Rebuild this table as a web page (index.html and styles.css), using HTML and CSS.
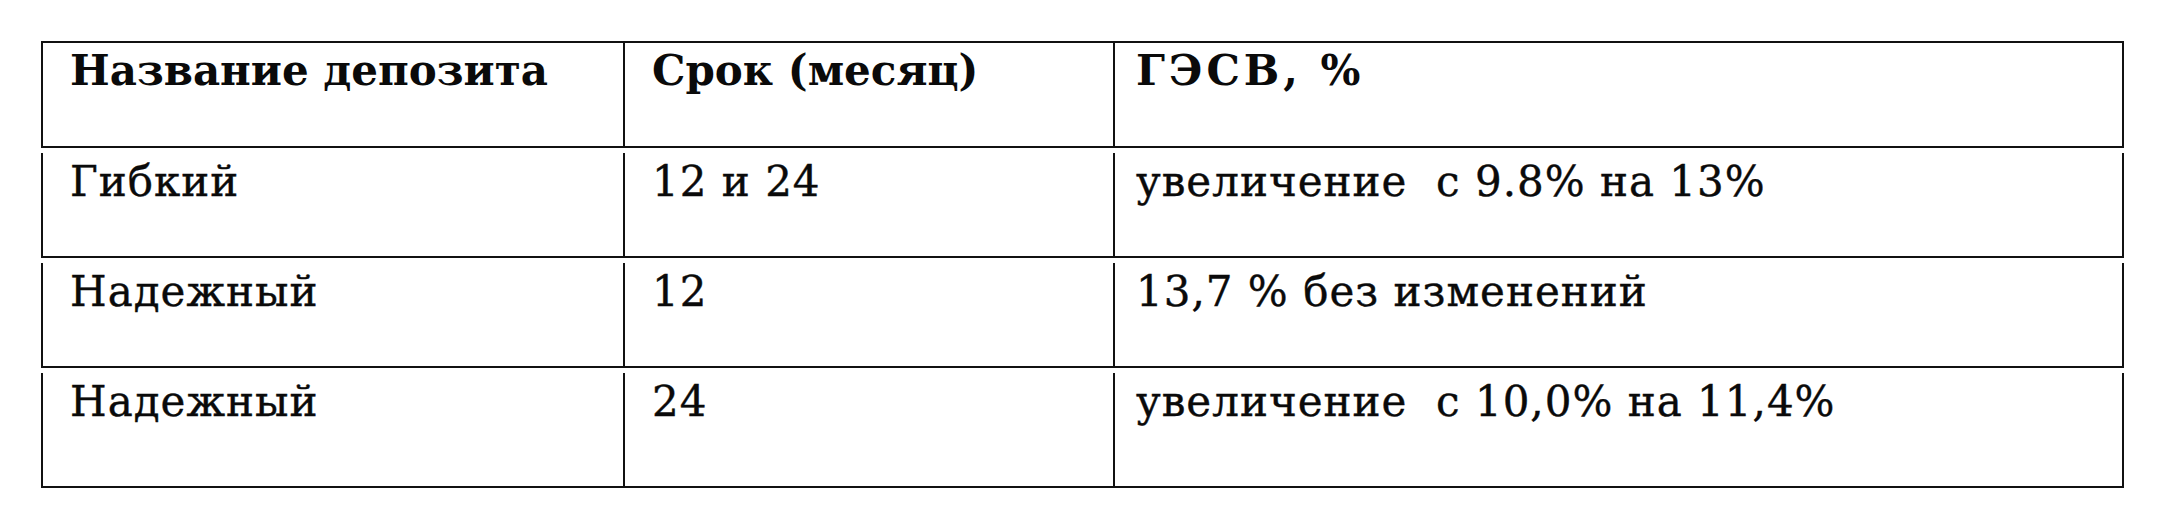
FILE: index.html
```html
<!DOCTYPE html>
<html lang="ru">
<head>
<meta charset="utf-8">
<title>Депозиты</title>
<link rel="stylesheet" href="styles.css">
</head>
<body>
<div class="table">
  <div class="row head">
    <div class="cell">Название депозита</div>
    <div class="cell">Срок (месяц)</div>
    <div class="cell wide">ГЭСВ, %</div>
  </div>
  <div class="row">
    <div class="cell">Гибкий</div>
    <div class="cell">12 и 24</div>
    <div class="cell">увеличение&nbsp; с 9.8% на 13%</div>
  </div>
  <div class="row">
    <div class="cell">Надежный</div>
    <div class="cell">12</div>
    <div class="cell">13,7 % без изменений</div>
  </div>
  <div class="row last">
    <div class="cell">Надежный</div>
    <div class="cell">24</div>
    <div class="cell">увеличение&nbsp; с 10,0% на 11,4%</div>
  </div>
</div>
</body>
</html>
```
FILE: styles.css
```css
html, body {
  margin: 0;
  padding: 0;
  background: #fff;
}
body {
  padding: 41px 0 0 41px;
  font-family: "DejaVu Serif", "Liberation Serif", serif;
  color: #0a0a0a;
}
.table {
  width: 2083px;
  display: flex;
  flex-direction: column;
  gap: 5px;
}
.row {
  display: grid;
  grid-template-columns: 580px 490px 1fr;
  height: 105px;
  box-sizing: border-box;
  border-left: 2px solid #111;
  border-right: 2px solid #111;
  border-bottom: 2px solid #111;
}
.row.head {
  height: 107px;
  border-top: 2px solid #111;
  font-weight: bold;
}
.row.last {
  height: 115px;
}
.cell {
  font-size: 42px;
  line-height: 1.15;
  padding: 5px 0 0 27px;
  white-space: nowrap;
  letter-spacing: 1px;
  -webkit-text-stroke: 0.4px #0a0a0a;
}
.head .cell {
  padding-top: 4px;
  letter-spacing: 0;
  -webkit-text-stroke: 0;
}
.head .cell.wide {
  letter-spacing: 4px;
}
.cell + .cell {
  border-left: 2px solid #111;
}
.cell:last-child {
  padding-left: 21px;
}
```
